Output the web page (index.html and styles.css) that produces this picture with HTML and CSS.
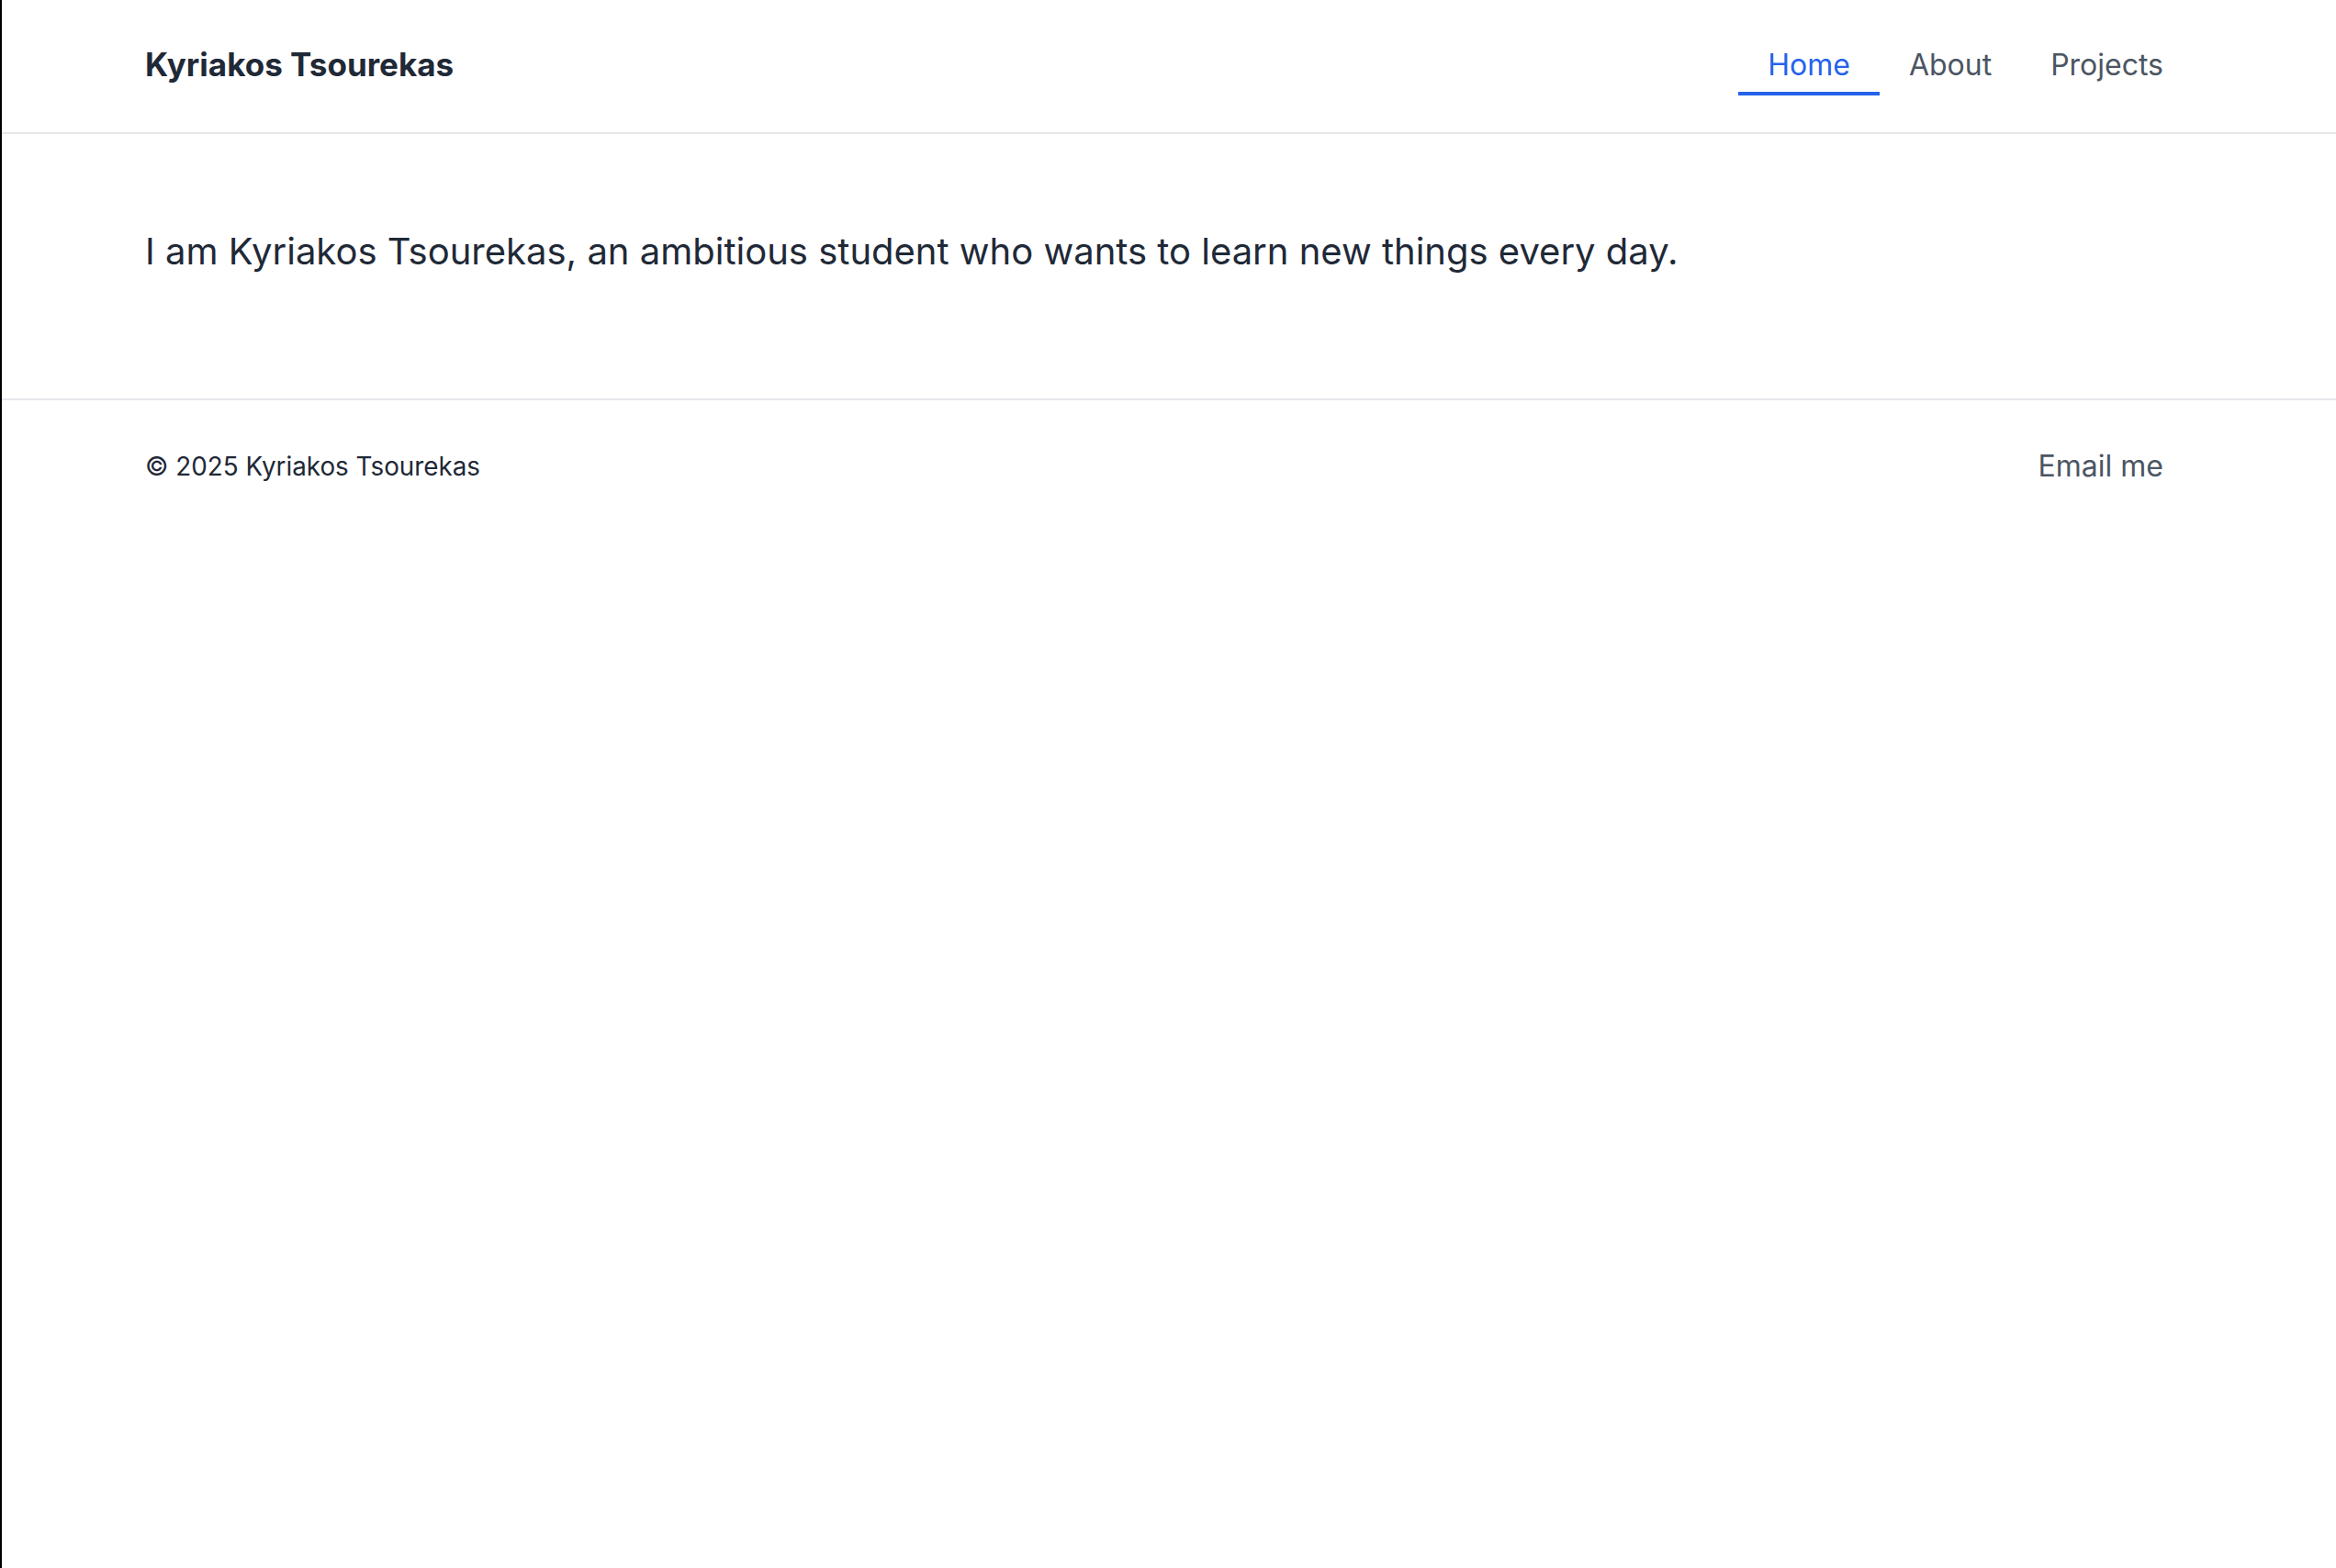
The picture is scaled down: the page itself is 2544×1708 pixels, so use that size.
FILE: index.html
```html
<!DOCTYPE html>
<html lang="en">
<head>
<meta charset="utf-8">
<title>Kyriakos Tsourekas</title>
<link rel="stylesheet" href="styles.css">
</head>
<body>
<div class="page">
  <header class="site-header">
    <a class="brand" href="#">Kyriakos Tsourekas</a>
    <nav class="nav">
      <a class="nav-link active" href="#">Home</a>
      <a class="nav-link" href="#">About</a>
      <a class="nav-link" href="#">Projects</a>
    </nav>
  </header>
  <main class="main">
    <p class="intro">I am Kyriakos Tsourekas, an ambitious student who wants to learn new things every day.</p>
  </main>
  <footer class="site-footer">
    <span class="copy">© 2025 Kyriakos Tsourekas</span>
    <a class="footer-link" href="#">Email me</a>
  </footer>
</div>
</body>
</html>
```
FILE: styles.css
```css
* { box-sizing: border-box; }
html, body { margin: 0; padding: 0; background: #fff; }
body {
  font-family: Inter, "Noto Sans", "Liberation Sans", sans-serif;
  color: #1f2937;
}
a { text-decoration: none; }
.page {
  min-height: 100vh;
  border-left: 2px solid #000;
}
.site-header {
  height: 146px;
  padding: 0 156px;
  display: flex;
  align-items: center;
  justify-content: space-between;
  border-bottom: 2px solid #e5e7eb;
}
.brand {
  font-size: 35px;
  font-weight: 700;
  color: #1f2937;
  line-height: 48px;
  padding-bottom: 5px;
}
.nav { display: flex; align-items: center; }
.nav-link {
  font-size: 32px;
  line-height: 48px;
  color: #4b5563;
  padding: 7px 32px 5px;
  border-bottom: 4px solid transparent;
}
.nav-link.active {
  color: #2563eb;
  border-bottom-color: #2563eb;
}
.main {
  padding: 102px 156px 106px;
  border-bottom: 2px solid #e5e7eb;
}
.intro {
  margin: 0 0 28px;
  font-size: 40px;
  line-height: 52px;
  color: #1f2937;
}
.site-footer {
  padding: 48px 156px;
  display: flex;
  align-items: center;
  justify-content: space-between;
}
.copy {
  font-size: 27.8px;
  line-height: 42px;
  color: #1f2937;
}
.footer-link {
  font-size: 32px;
  line-height: 48px;
  padding: 0 32px;
  color: #4b5563;
}
```
